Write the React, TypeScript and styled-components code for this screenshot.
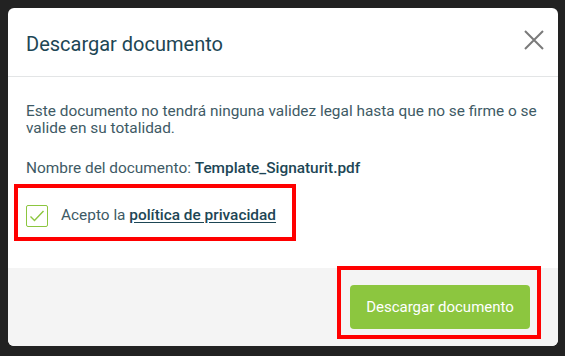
import React from "react";
import styled, { createGlobalStyle } from "styled-components";

const Global = createGlobalStyle`
  html, body { margin: 0; padding: 0; background: #222222; }
  body { font-family: Roboto, "Liberation Sans", Arial, sans-serif; }
  * { box-sizing: border-box; }
`;

const Page = styled.div`
  width: 565px;
  height: 356px;
  padding: 8px;
  background: #222222;
`;

const Modal = styled.div`
  width: 550px;
  height: 338px;
  background: #ffffff;
  border-radius: 6px;
  overflow: hidden;
  display: flex;
  flex-direction: column;
`;

const Header = styled.div`
  height: 69px;
  border-bottom: 1px solid #e3e5e6;
  display: flex;
  align-items: flex-start;
  justify-content: space-between;
  padding: 22px 13px 0 18px;
`;

const Title = styled.h2`
  margin: 0;
  font-size: 20px;
  line-height: 28px;
  font-weight: 400;
  color: #1d4655;
`;

const CloseButton = styled.button`
  margin-top: -1px;
  width: 22px;
  height: 22px;
  padding: 1px;
  border: none;
  background: none;
  display: flex;
  cursor: pointer;
`;

const Body = styled.div`
  flex: 1;
  padding: 26px 12px 27px 18px;
  color: #3e5a65;
  font-size: 15.4px;
  line-height: 17px;
`;

const Paragraph = styled.p<{ $gap?: number }>`
  margin: 0 0 ${(p) => p.$gap ?? 0}px;
`;

const Strong = styled.span`
  font-weight: 500;
  color: #1d4655;
`;

const Highlight = styled.div<{ $pad: string }>`
  border: 4px solid #ff0000;
  padding: ${(p) => p.$pad};
`;

const CheckRow = styled(Highlight)`
  margin-left: -12px;
  width: 282px;
  height: 57px;
  display: flex;
  align-items: flex-start;
  gap: 13px;
`;

const Box = styled.span`
  width: 22px;
  height: 22px;
  border: 1px solid #8cc63f;
  border-radius: 2px;
  display: flex;
  align-items: center;
  justify-content: center;
  flex-shrink: 0;
`;

const Label = styled.span`
  padding-top: 2px;
  color: #3e5a65;
  white-space: nowrap;
`;

const Link = styled.a`
  color: #1d4655;
  font-weight: 500;
  text-decoration: underline;
  text-underline-offset: 2px;
`;

const Footer = styled.div`
  height: 78px;
  background: #f4f4f4;
  display: flex;
  justify-content: flex-end;
  align-items: flex-start;
  padding: 0 17px 7px 0;
`;

const ButtonFrame = styled(Highlight)`
  margin-top: -2px;
`;

const PrimaryButton = styled.button`
  width: 180px;
  height: 44px;
  border: none;
  border-radius: 4px;
  background: #8cc63f;
  color: #ffffff;
  font-family: Roboto, "Liberation Sans", Arial, sans-serif;
  font-size: 15px;
  cursor: pointer;
`;

export default function App() {
  return (
    <>
      <Global />
      <Page>
        <Modal>
          <Header>
            <Title>Descargar documento</Title>
            <CloseButton aria-label="Cerrar">
              <svg width="20" height="20" viewBox="0 0 20 20">
                <path d="M1 1L19 19M19 1L1 19" stroke="#7a7a7a" strokeWidth="2" fill="none" />
              </svg>
            </CloseButton>
          </Header>
          <Body>
            <Paragraph $gap={23}>
              Este documento no tendrá ninguna validez legal hasta que no se firme o se valide en su totalidad.
            </Paragraph>
            <Paragraph $gap={7}>
              Nombre del documento: <Strong>Template_Signaturit.pdf</Strong>
            </Paragraph>
            <CheckRow $pad="17px 0 0 8px">
              <Box>
                <svg width="16" height="14" viewBox="0 0 16 14">
                  <path d="M1.5 7.5L5.5 11.5L14.5 2" stroke="#8cc63f" strokeWidth="1.4" fill="none" />
                </svg>
              </Box>
              <Label>
                Acepto la <Link>política de privacidad</Link>
              </Label>
            </CheckRow>
          </Body>
          <Footer>
            <ButtonFrame $pad="15px 7px 6px 9px">
              <PrimaryButton>Descargar documento</PrimaryButton>
            </ButtonFrame>
          </Footer>
        </Modal>
      </Page>
    </>
  );
}
